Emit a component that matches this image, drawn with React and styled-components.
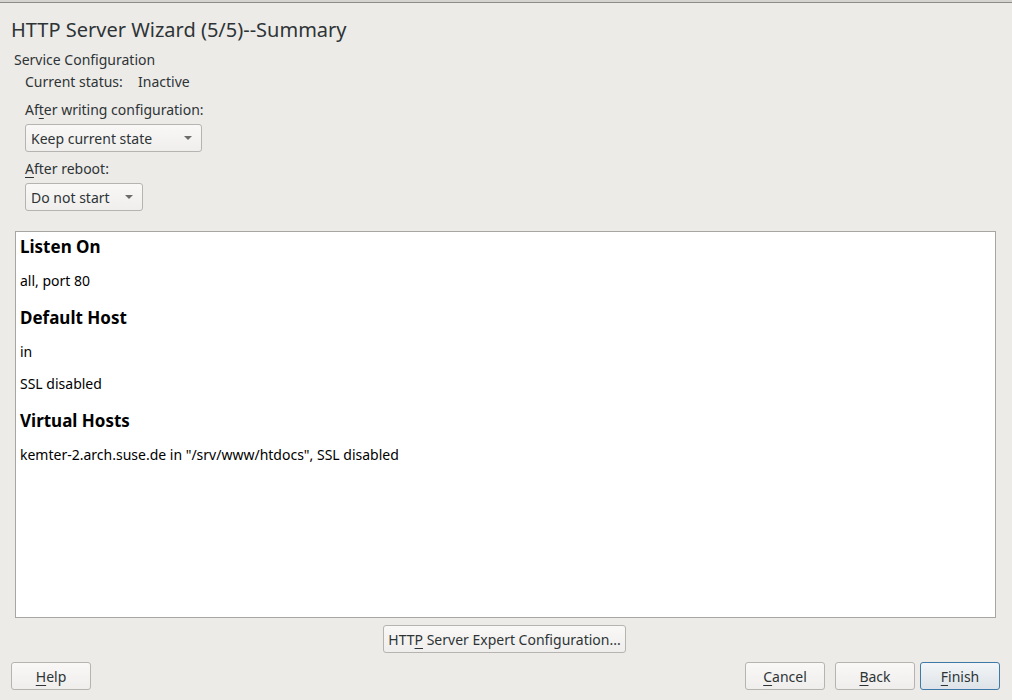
import React from "react";
import styled, { createGlobalStyle } from "styled-components";

const GlobalStyle = createGlobalStyle`
	html, body {
		margin: 0;
		padding: 0;
		background: #edebe8;
	}
	body {
		font-family: "Noto Sans", "Open Sans", sans-serif;
		font-size: 14px;
		color: #2e3436;
	}
`;

const Window = styled.div`
	width: 1012px;
	height: 700px;
	box-sizing: border-box;
	border-top: 2px solid #d6d4d1;
	display: flex;
	flex-direction: column;
	background: #edebe8;
	overflow: hidden;
	&::before {
		content: "";
		display: block;
		height: 1px;
		background: #8c8c8a;
	}
`;

const Title = styled.h1`
	margin: 14px 0 0 11px;
	font-size: 20px;
	font-weight: 400;
	line-height: 26px;
	color: #2e3436;
`;

const Section = styled.div`
	padding: 8px 0 0 14px;
`;

const SectionLabel = styled.div`
	line-height: 18px;
`;

const SectionBody = styled.div`
	padding-left: 11px;
	display: flex;
	flex-direction: column;
`;

const StatusRow = styled.div`
	display: flex;
	margin-top: 4px;
	line-height: 18px;
	span:first-child {
		width: 113px;
	}
`;

const FieldLabel = styled.div`
	margin-top: ${p => p.top}px;
	line-height: 18px;
`;

const Combo = styled.div`
	margin-top: 5px;
	width: ${p => p.width}px;
	height: 28px;
	box-sizing: border-box;
	border: 1px solid #b6b4b0;
	border-radius: 3px;
	background: linear-gradient(#f9f8f7, #efeeec);
	display: flex;
	align-items: center;
	justify-content: space-between;
	padding: 0 9px 0 5px;
	color: #2e3436;
`;

const Arrow = styled.span`
	width: 0;
	height: 0;
	border-left: 4px solid transparent;
	border-right: 4px solid transparent;
	border-top: 4px solid #6c6c6a;
`;

const Mnemonic = styled.u`
	text-decoration: underline;
	text-underline-offset: 3px;
`;

const SummaryBox = styled.div`
	margin: 20px 16px 0 15px;
	height: 387px;
	box-sizing: border-box;
	border: 1px solid #a8a6a2;
	background: #ffffff;
	padding: 3px 4px;
	color: #000;
`;

const SummaryHeading = styled.h2`
	margin: ${p => (p.first ? 0 : 14)}px 0 0 0;
	font-size: 17px;
	font-weight: 700;
	line-height: 24px;
`;

const SummaryText = styled.p`
	margin: ${p => (p.afterHeading ? 11 : 10)}px 0 0 0;
	line-height: 22px;
`;

const ExpertRow = styled.div`
	display: flex;
	justify-content: center;
	margin-top: 7px;
	padding-right: 3px;
`;

const Button = styled.button`
	font-family: inherit;
	font-size: 14px;
	color: #2e3436;
	height: 28px;
	min-width: ${p => p.width || 80}px;
	box-sizing: border-box;
	padding: 0 4px;
	border-radius: 3px;
	border: 1px solid ${p => (p.primary ? "#3f79a8" : "#b6b4b0")};
	background: ${p =>
		p.primary
			? "linear-gradient(#f3f5f7, #dde3e8)"
			: "linear-gradient(#f9f8f7, #efeeec)"};
`;

const ButtonBar = styled.div`
	display: flex;
	align-items: center;
	margin-top: 9px;
	padding: 0 12px 0 11px;
`;

const Spacer = styled.div`
	flex: 1;
`;

const RightButtons = styled.div`
	display: flex;
	gap: 10px;
	& > :last-child {
		margin-left: -5px;
	}
`;

export default function App() {
	return (
		<>
			<GlobalStyle />
			<Window>
				<Title>HTTP Server Wizard (5/5)--Summary</Title>
				<Section>
					<SectionLabel>Service Configuration</SectionLabel>
					<SectionBody>
						<StatusRow>
							<span>Current status:</span>
							<span>Inactive</span>
						</StatusRow>
						<FieldLabel top={10}>
							Af<Mnemonic>t</Mnemonic>er writing configuration:
						</FieldLabel>
						<Combo width={177}>
							<span>Keep current state</span>
							<Arrow />
						</Combo>
						<FieldLabel top={8}>
							<Mnemonic>A</Mnemonic>fter reboot:
						</FieldLabel>
						<Combo width={118}>
							<span>Do not start</span>
							<Arrow />
						</Combo>
					</SectionBody>
				</Section>
				<SummaryBox>
					<SummaryHeading first>Listen On</SummaryHeading>
					<SummaryText afterHeading>all, port 80</SummaryText>
					<SummaryHeading>Default Host</SummaryHeading>
					<SummaryText afterHeading>in</SummaryText>
					<SummaryText>SSL disabled</SummaryText>
					<SummaryHeading>Virtual Hosts</SummaryHeading>
					<SummaryText afterHeading>
						kemter-2.arch.suse.de in "/srv/www/htdocs", SSL disabled
					</SummaryText>
				</SummaryBox>
				<ExpertRow>
					<Button width={240}>
						HTT<Mnemonic>P</Mnemonic> Server Expert Configuration...
					</Button>
				</ExpertRow>
				<ButtonBar>
					<Button>
						<Mnemonic>H</Mnemonic>elp
					</Button>
					<Spacer />
					<RightButtons>
						<Button>
							<Mnemonic>C</Mnemonic>ancel
						</Button>
						<Button>
							<Mnemonic>B</Mnemonic>ack
						</Button>
						<Button primary>
							<Mnemonic>F</Mnemonic>inish
						</Button>
					</RightButtons>
				</ButtonBar>
			</Window>
		</>
	);
}
